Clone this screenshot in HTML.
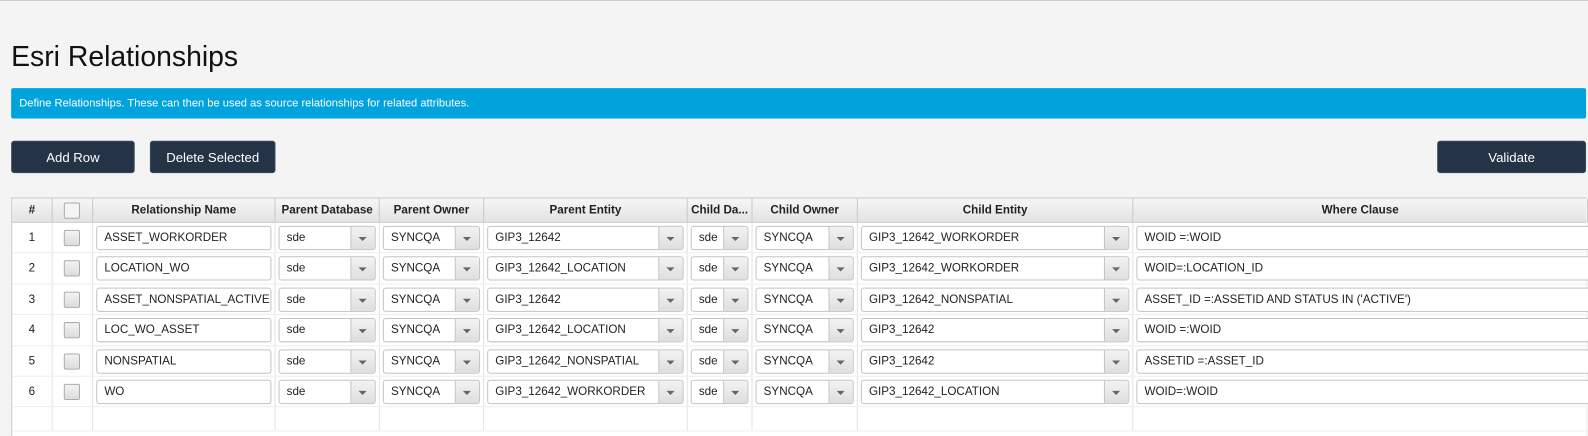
<!DOCTYPE html>
<html><head><style>
html,body{margin:0;width:1588px;height:436px;overflow:hidden}
body{background:#f4f4f4;font-family:"Liberation Sans",sans-serif;position:relative;border-top:1px solid #ccc;box-sizing:border-box}
#w{position:absolute;left:0;top:0;width:1568px;height:431px;transform:scale(1.0128);transform-origin:0 0}
h1{position:absolute;left:11px;top:39px;margin:0;font-weight:normal;font-size:28px;color:#111}
.banner{position:absolute;left:11px;top:86px;width:1555px;height:30px;background:#00a3dc;color:#fff;font-size:11px;line-height:30px;padding-left:8px;box-sizing:border-box;border-radius:2px}
.btn{position:absolute;top:138px;height:32px;background:#243345;color:#fff;font-size:13px;line-height:32px;text-align:center;border-radius:3px;border:1px solid #3a4a5c;box-sizing:border-box}
.tbl{position:absolute;left:11px;top:194px;width:1555px;height:241px;background:#fff;border:1px solid #c8c8c8;border-right:none;box-sizing:border-box}
.row{display:flex;height:30.4px;border-bottom:1px solid #eee;box-sizing:border-box}
.hdr{height:24px;background:linear-gradient(#f6f6f6,#e3e3e3);border-bottom:1px solid #c8c8c8}
.c{border-right:1px solid #e2e2e2;box-sizing:border-box;position:relative;flex:none;font-size:11.5px;color:#222}
.hdr .c{border-right:1px solid #c8c8c8;font-weight:bold;font-size:11.5px;text-align:center;line-height:24px;color:#222}
.num{text-align:center;line-height:30px}
.cb{position:absolute;left:11px;top:7px;width:14px;height:14px;border:1px solid #aaa;border-radius:2px;background:linear-gradient(#f3f3f3,#dcdcdc)}
.hdr .cb{top:4px;background:#f4f4f4}
.in,.co{position:absolute;left:3px;right:3px;top:3px;height:24px;border:1px solid #c3c3c3;border-radius:3px;background:#fff;box-sizing:border-box;line-height:22px;padding-left:7px;font-size:11.5px;white-space:nowrap;overflow:hidden}
.co:after{content:"";position:absolute;right:0;top:0;width:23px;height:22px;border-left:1px solid #c3c3c3;background:linear-gradient(#f3f3f3,#dedede)}
.co:before{content:"";position:absolute;right:8px;top:10px;border-left:4px solid transparent;border-right:4px solid transparent;border-top:4px solid #666;z-index:2}
.w1{width:40px}.w2{width:40px}.w3{width:180px}.w4{width:103px}.w5{width:103px}.w6{width:201px}.w7{width:64px}.w8{width:104px}.w9{width:272px}.w10{width:449px;border-right:none}
.w10 .in{right:-4px}
</style></head><body><div id="w">
<h1>Esri Relationships</h1>
<div class="banner">Define Relationships. These can then be used as source relationships for related attributes.</div>
<div class="btn" style="left:11px;width:122px">Add Row</div>
<div class="btn" style="left:148px;width:124px">Delete Selected</div>
<div class="btn" style="left:1419px;width:147px">Validate</div>
<div class="tbl">
<div class="row hdr"><div class="c w1">#</div><div class="c w2"><div class="cb"></div></div><div class="c w3">Relationship Name</div><div class="c w4">Parent Database</div><div class="c w5">Parent Owner</div><div class="c w6">Parent Entity</div><div class="c w7">Child Da...</div><div class="c w8">Child Owner</div><div class="c w9">Child Entity</div><div class="c w10">Where Clause</div></div>
<div class="row"><div class="c w1 num">1</div><div class="c w2"><div class="cb"></div></div><div class="c w3"><div class="in">ASSET_WORKORDER</div></div><div class="c w4"><div class="co">sde</div></div><div class="c w5"><div class="co">SYNCQA</div></div><div class="c w6"><div class="co">GIP3_12642</div></div><div class="c w7"><div class="co">sde</div></div><div class="c w8"><div class="co">SYNCQA</div></div><div class="c w9"><div class="co">GIP3_12642_WORKORDER</div></div><div class="c w10"><div class="in">WOID =:WOID</div></div></div>
<div class="row"><div class="c w1 num">2</div><div class="c w2"><div class="cb"></div></div><div class="c w3"><div class="in">LOCATION_WO</div></div><div class="c w4"><div class="co">sde</div></div><div class="c w5"><div class="co">SYNCQA</div></div><div class="c w6"><div class="co">GIP3_12642_LOCATION</div></div><div class="c w7"><div class="co">sde</div></div><div class="c w8"><div class="co">SYNCQA</div></div><div class="c w9"><div class="co">GIP3_12642_WORKORDER</div></div><div class="c w10"><div class="in">WOID=:LOCATION_ID</div></div></div>
<div class="row"><div class="c w1 num">3</div><div class="c w2"><div class="cb"></div></div><div class="c w3"><div class="in">ASSET_NONSPATIAL_ACTIVE</div></div><div class="c w4"><div class="co">sde</div></div><div class="c w5"><div class="co">SYNCQA</div></div><div class="c w6"><div class="co">GIP3_12642</div></div><div class="c w7"><div class="co">sde</div></div><div class="c w8"><div class="co">SYNCQA</div></div><div class="c w9"><div class="co">GIP3_12642_NONSPATIAL</div></div><div class="c w10"><div class="in">ASSET_ID =:ASSETID AND STATUS IN ('ACTIVE')</div></div></div>
<div class="row"><div class="c w1 num">4</div><div class="c w2"><div class="cb"></div></div><div class="c w3"><div class="in">LOC_WO_ASSET</div></div><div class="c w4"><div class="co">sde</div></div><div class="c w5"><div class="co">SYNCQA</div></div><div class="c w6"><div class="co">GIP3_12642_LOCATION</div></div><div class="c w7"><div class="co">sde</div></div><div class="c w8"><div class="co">SYNCQA</div></div><div class="c w9"><div class="co">GIP3_12642</div></div><div class="c w10"><div class="in">WOID =:WOID</div></div></div>
<div class="row"><div class="c w1 num">5</div><div class="c w2"><div class="cb"></div></div><div class="c w3"><div class="in">NONSPATIAL</div></div><div class="c w4"><div class="co">sde</div></div><div class="c w5"><div class="co">SYNCQA</div></div><div class="c w6"><div class="co">GIP3_12642_NONSPATIAL</div></div><div class="c w7"><div class="co">sde</div></div><div class="c w8"><div class="co">SYNCQA</div></div><div class="c w9"><div class="co">GIP3_12642</div></div><div class="c w10"><div class="in">ASSETID =:ASSET_ID</div></div></div>
<div class="row"><div class="c w1 num">6</div><div class="c w2"><div class="cb"></div></div><div class="c w3"><div class="in">WO</div></div><div class="c w4"><div class="co">sde</div></div><div class="c w5"><div class="co">SYNCQA</div></div><div class="c w6"><div class="co">GIP3_12642_WORKORDER</div></div><div class="c w7"><div class="co">sde</div></div><div class="c w8"><div class="co">SYNCQA</div></div><div class="c w9"><div class="co">GIP3_12642_LOCATION</div></div><div class="c w10"><div class="in">WOID=:WOID</div></div></div>
<div class="row" style="height:24px"><div class="c w1"></div><div class="c w2"></div><div class="c w3"></div><div class="c w4"></div><div class="c w5"></div><div class="c w6"></div><div class="c w7"></div><div class="c w8"></div><div class="c w9"></div><div class="c w10"></div></div>
</div>
</div></body></html>
